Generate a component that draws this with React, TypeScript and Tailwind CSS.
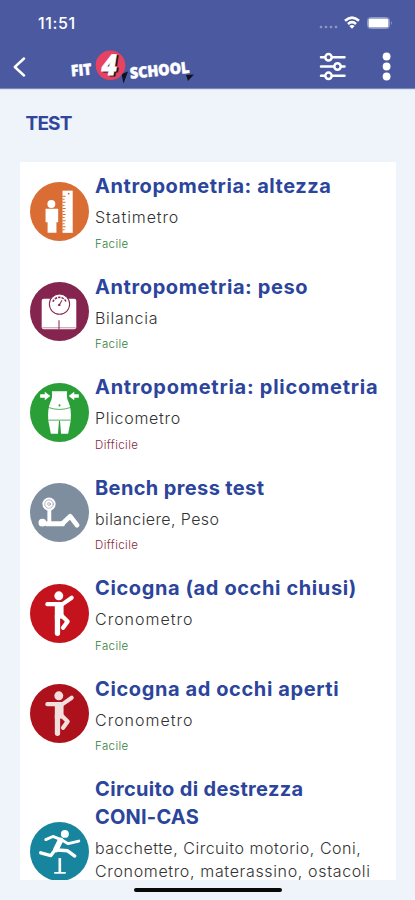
import type { ReactNode } from "react";

type Line = { text: string; tracking: string };

type Row = {
  title: Line[];
  sub: Line[];
  level?: "Facile" | "Difficile";
  color: string;
  icon: ReactNode;
  rowClass: string;
};

const Stork = ({ tint }: { tint: string }) => (
  <g fill="none" stroke={tint} strokeLinecap="round" strokeLinejoin="round">
    <circle cx="28.3" cy="11.6" r="4.4" fill={tint} stroke="none" />
    <path d="M17 19.8H32L41 13.5" strokeWidth="4" />
    <path d="M24.4 18H33V34H24.4Z" fill={tint} stroke="none" />
    <path d="M27 31V48.5" strokeWidth="5.2" />
    <path d="M31 31L37 36.8L32.5 43" strokeWidth="4.2" />
  </g>
);

const rows: Row[] = [
  {
    title: [{ text: "Antropometria: altezza", tracking: "tracking-[0.56px]" }],
    sub: [{ text: "Statimetro", tracking: "tracking-[0.9px]" }],
    level: "Facile",
    color: "#d96d33",
    rowClass: "h-[79px]",
    icon: (
      <g fill="#fff">
        <circle cx="21" cy="21.7" r="3.9" />
        <path d="M15.3 26.3H27.7V39.5H26V50H17.3V39.5H15.3Z" />
        <path d="M32 8.5H42V50H32Z" />
        <path d="M32 14H35M32 17H34M32 20H35M32 23H34M32 26H35M32 29H34M32 32H35M32 35H34M32 38H35M32 41H34M32 44H35M32 47H34" stroke="#d96d33" strokeWidth="1" />
        <circle cx="38" cy="11.5" r="0.9" fill="#d96d33" />
      </g>
    ),
  },
  {
    title: [{ text: "Antropometria: peso", tracking: "tracking-[0.6px]" }],
    sub: [{ text: "Bilancia", tracking: "tracking-[0.7px]" }],
    level: "Facile",
    color: "#85254f",
    rowClass: "h-[79px]",
    icon: (
      <g>
        <rect x="11.5" y="16.5" width="34" height="30" rx="2" fill="#fff" />
        <circle cx="29" cy="21.7" r="10" fill="#fff" stroke="#85254f" strokeWidth="1" />
        <path d="M22.5 19.5A7 7 0 0 1 35.5 19.5" fill="none" stroke="#85254f" strokeWidth="1.5" strokeDasharray="2.4 1" />
        <path d="M28.4 23L31.5 18" stroke="#85254f" strokeWidth="1" />
        <circle cx="28.8" cy="22.5" r="1.2" fill="#85254f" />
        <path d="M28.5 37.5V46.5" stroke="#85254f" strokeWidth="1" />
        <path d="M12 45H45" stroke="#85254f" strokeWidth="0.5" />
      </g>
    ),
  },
  {
    title: [{ text: "Antropometria: plicometria", tracking: "tracking-[0.74px]" }],
    sub: [{ text: "Plicometro", tracking: "tracking-[0.7px]" }],
    level: "Difficile",
    color: "#2a9f38",
    rowClass: "h-[79px]",
    icon: (
      <g fill="#fff">
        <path d="M21.5 8H36.5Q35.5 14 38 19Q41 26 40 37L37.5 50H30.5L29.5 37H28.5L27.5 50H20.5L18 37Q17 26 20 19Q22.5 14 21.5 8Z" />
        <path d="M10 11H14.5V8.5L20 12.8L14.5 17V14.5H10ZM48 11H43.5V8.5L38 12.8L43.5 17V14.5H48Z" />
        <path d="M18 24Q29 28 40 24M18 36.5H40" fill="none" stroke="#2a9f38" strokeWidth="0.8" />
        <circle cx="29" cy="22" r="1" fill="#2a9f38" />
      </g>
    ),
  },
  {
    title: [{ text: "Bench press test", tracking: "tracking-[0.37px]" }],
    sub: [{ text: "bilanciere, Peso", tracking: "tracking-[0.4px]" }],
    level: "Difficile",
    color: "#7f8e9e",
    rowClass: "h-[79px]",
    icon: (
      <g fill="none" stroke="#fff" strokeLinecap="round" strokeLinejoin="round">
        <circle cx="18.7" cy="20.7" r="6.5" fill="#fff" stroke="none" />
        <circle cx="18.7" cy="20.7" r="4.2" stroke="#7f8e9e" strokeWidth="0.6" />
        <circle cx="18.7" cy="20.7" r="1.4" stroke="#7f8e9e" strokeWidth="0.6" />
        <path d="M19 27V38" strokeWidth="3.8" />
        <circle cx="12.2" cy="39" r="3.8" fill="#fff" stroke="none" />
        <path d="M17 40.1H32" strokeWidth="5" />
        <path d="M32 39.8L39.5 32.7L46.3 41.5" strokeWidth="4.6" />
      </g>
    ),
  },
  {
    title: [{ text: "Cicogna (ad occhi chiusi)", tracking: "tracking-[0.6px]" }],
    sub: [{ text: "Cronometro", tracking: "tracking-[1px]" }],
    level: "Facile",
    color: "#c5131e",
    rowClass: "h-[79px]",
    icon: <Stork tint="#fff" />,
  },
  {
    title: [{ text: "Cicogna ad occhi aperti", tracking: "tracking-[0.6px]" }],
    sub: [{ text: "Cronometro", tracking: "tracking-[1px]" }],
    level: "Facile",
    color: "#ad111c",
    rowClass: "h-[79px]",
    icon: <Stork tint="#f3dede" />,
  },
  {
    title: [
      { text: "Circuito di destrezza", tracking: "tracking-[0.35px]" },
      { text: "CONI-CAS", tracking: "tracking-[0.2px]" },
    ],
    sub: [
      { text: "bacchette, Circuito motorio, Coni,", tracking: "tracking-[0.52px]" },
      { text: "Cronometro, materassino, ostacoli", tracking: "tracking-[0.65px]" },
    ],
    color: "#18859f",
    rowClass: "h-[154px]",
    icon: (
      <g fill="none" stroke="#fff" strokeLinecap="round" strokeLinejoin="round">
        <circle cx="34.3" cy="11.7" r="3.9" fill="#fff" stroke="none" />
        <path d="M15.5 17.3L22.5 14.2L31 17.5L37.5 21.3L48 18.7" strokeWidth="2.8" />
        <path d="M30 18L25.5 27" strokeWidth="5.5" />
        <path d="M25 27L20.5 33L10.5 30.3M27 27.5L37 28.3L44 33.5" strokeWidth="3.3" />
        <path d="M29.3 35.5V49.5" strokeWidth="2.6" strokeLinecap="butt" />
        <path d="M24.5 50H34.5" strokeWidth="1.8" />
      </g>
    ),
  },
];

function Logo() {
  return (
    <svg className="ml-[33px] h-[42px] w-[144px] shrink-0 overflow-visible" viewBox="59 46 144 42" fontFamily="'Open Sans', sans-serif" fontWeight="800" fill="#fff">
      <path d="M121.5 74L128 71.5L123.5 83.5Z M186 75L194 74.5L188 81Z" fill="#10131f" />
      <circle cx="110.5" cy="65.3" r="14.8" fill="#e84261" />
      <text transform="translate(102.2 76) skewX(-9)" fontSize="28.5" fill="#151724" stroke="#151724" strokeWidth="0.8" textLength="15" lengthAdjust="spacingAndGlyphs">4</text>
      <text transform="translate(100.4 74.7) skewX(-9)" fontSize="28.5" stroke="#fff" strokeWidth="0.8" textLength="15" lengthAdjust="spacingAndGlyphs">4</text>
      <text x="71.5" y="76.3" fontSize="15.5" transform="rotate(-5 72 76)" stroke="#fff" strokeWidth="0.5" textLength="20.5" lengthAdjust="spacingAndGlyphs">FIT</text>
      <text x="130.5" y="78.8" fontSize="15.5" transform="rotate(-6 130 78)" stroke="#fff" strokeWidth="0.5" textLength="59.5" lengthAdjust="spacingAndGlyphs">SCHOOL</text>
    </svg>
  );
}

export default function App() {
  return (
    <div className="flex h-[900px] w-[415px] flex-col overflow-hidden bg-[#eef4f9] font-['Inter',sans-serif]">
      <header className="flex h-[88px] shrink-0 flex-col bg-[#4b5aa0] text-white shadow-[0_1px_1px_#7c88bb]">
        <div className="flex h-[46px] items-center pl-[38px] pr-[21px]">
          <span className="text-[16px] font-medium leading-5 tracking-[0.6px]">11:51</span>
          <div className="ml-auto flex items-center">
            <svg className="h-4 w-[76px]" viewBox="319 15 76 16" fill="none" stroke="#fff">
              <g fill="#8f99c8" stroke="none">
                <circle cx="322" cy="27" r="1.3" />
                <circle cx="327" cy="27" r="1.3" />
                <circle cx="332" cy="27" r="1.3" />
                <circle cx="337" cy="27" r="1.3" />
              </g>
              <path d="M346 20.8Q353 14.5 360 20.8M349 24Q353 20.3 357 24" strokeWidth="2.5" />
              <path d="M350.3 26Q353 23.8 355.7 26L353 28.8Z" fill="#fff" stroke="none" />
              <rect x="368.5" y="17.5" width="22" height="11" rx="3" stroke="#8f99c8" />
              <rect x="369.5" y="18.5" width="20" height="9" rx="1.5" fill="#fff" stroke="none" />
              <path d="M392.3 21Q394 23 392.3 25Z" fill="#a0a9d0" stroke="none" />
            </svg>
          </div>
        </div>
        <div className="flex h-[42px] items-center pl-[12px]">
          <svg className="h-5 w-[14px]" viewBox="0 0 14 20" fill="none" stroke="#fff" strokeWidth="2.4" strokeLinecap="round" strokeLinejoin="round">
            <path d="M12 1.5L2.8 10L12 18.5" />
          </svg>
          <Logo />
          <svg className="ml-auto mr-[21px] h-[30px] w-[76px]" viewBox="318 52 76 30" fill="#4b5aa0" stroke="#fff" strokeWidth="2.5" strokeLinecap="round">
            <path d="M321 57.3H344.5M321 66.5H344.5M321 75.8H344.5" />
            <circle cx="328.5" cy="57.3" r="3.2" />
            <circle cx="337.5" cy="66.5" r="3.2" />
            <circle cx="328.5" cy="75.8" r="3.2" />
            <g fill="#fff" stroke="none">
              <circle cx="386.6" cy="56.5" r="3.9" />
              <circle cx="386.6" cy="66.5" r="3.9" />
              <circle cx="386.6" cy="76.5" r="3.9" />
            </g>
          </svg>
        </div>
      </header>

      <h1 className="ml-[25.5px] mt-[22px] h-[28px] shrink-0 text-[19px] font-bold leading-7 tracking-[-0.8px] text-[#2f469c]">TEST</h1>

      <main className="ml-5 mt-[24px] flex h-[718px] w-[376px] shrink-0 flex-col gap-[21.5px] overflow-hidden bg-white pt-[10px]">
        {rows.map((row) => (
          <article key={row.title[0].text} className={`flex shrink-0 gap-[6px] pl-[10px] ${row.rowClass}`}>
            <svg className="-mt-px h-[59px] w-[59px] shrink-0 self-center" viewBox="0 0 58 58">
              <circle cx="29" cy="29" r="29" fill={row.color} />
              {row.icon}
            </svg>
            <div className="flex flex-col whitespace-nowrap">
              <h2 className="text-[20px] font-bold leading-7 text-[#2c459c]">
                {row.title.map((line) => (
                  <span key={line.text} className={`block ${line.tracking}`}>{line.text}</span>
                ))}
              </h2>
              <p className="mt-[6px] text-[16px] font-light leading-[22.5px] text-[#333]">
                {row.sub.map((line) => (
                  <span key={line.text} className={`block ${line.tracking}`}>{line.text}</span>
                ))}
              </p>
              {row.level && (
                <p className={`mt-[8px] text-[11.5px] font-light leading-[14px] tracking-[0.4px] ${row.level === "Facile" ? "text-[#2f8039]" : "text-[#852a3c]"}`}>
                  {row.level}
                </p>
              )}
            </div>
          </article>
        ))}
      </main>
      <div className="mx-auto mt-[8px] h-[4px] w-[148px] rounded-full bg-[#080808]" />
    </div>
  );
}
